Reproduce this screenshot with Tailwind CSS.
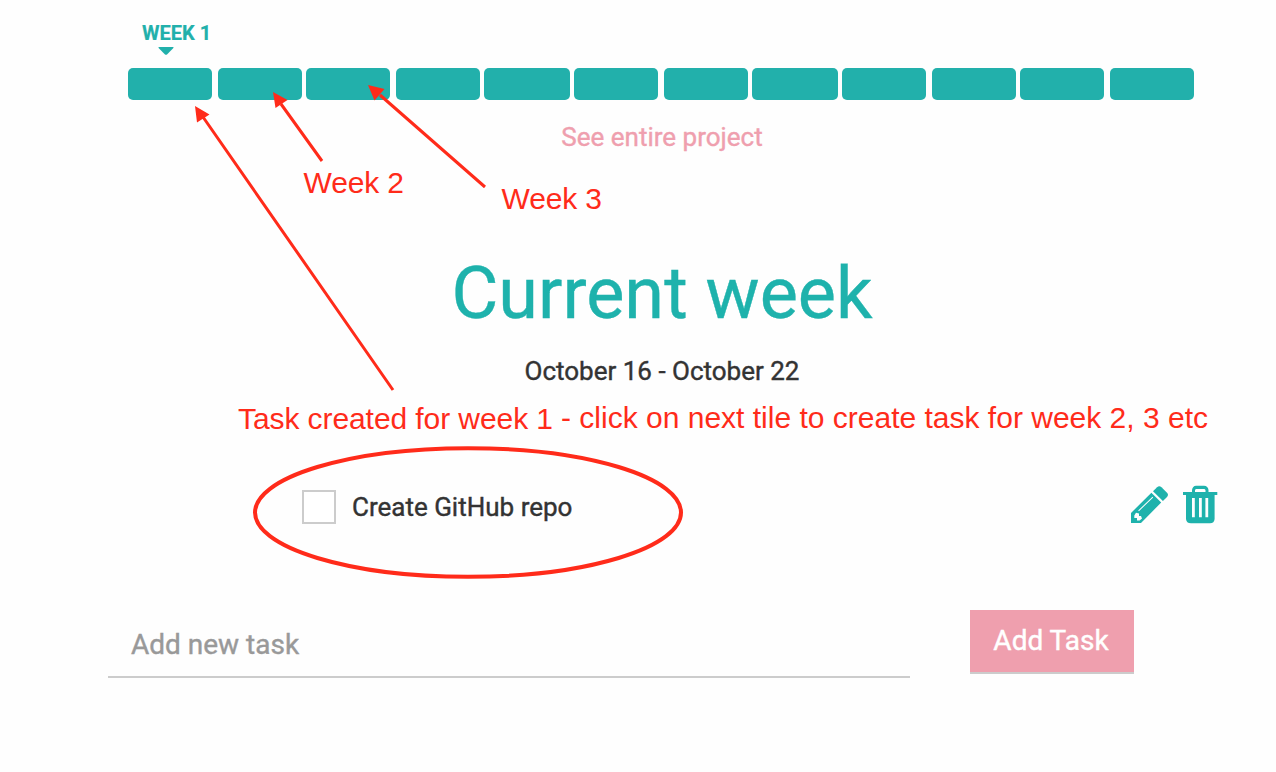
<!DOCTYPE html>
<html lang="en">
<head>
<meta charset="utf-8">
<title>Current week</title>
<script src="https://cdn.jsdelivr.net/npm/@tailwindcss/browser@4"></script>
</head>
<body class="bg-[#fefefe] font-[Roboto,sans-serif] text-[#333]">
<main class="relative flex h-[772px] w-[1276px] flex-col overflow-hidden [-webkit-text-stroke:0.4px]">
  <header class="flex h-[68px] flex-col pt-[21px]">
    <span class="ml-[142px] h-6 text-[20px] leading-6 font-bold whitespace-nowrap text-[#22b0ab] [-webkit-text-stroke:0.2px]">WEEK 1</span>
    <svg class="mt-0.5 ml-[158px] h-2 w-4" viewBox="0 0 16 8" fill="#22b0ab"><path d="M1 0H15Q16 0 15.400 1L9 7.400Q8 8.200 7 7.400L.6 1Q0 0 1 0Z"/></svg>
  </header>
  <nav class="flex h-8 pl-[128px] *:h-8 *:shrink-0 *:rounded-[5px] *:bg-[#22b0ab]">
    <div class="mr-1.5 w-[84px]"></div><div class="mr-1 w-[84px]"></div><div class="mr-1.5 w-[84px]"></div><div class="mr-1 w-[84px]"></div><div class="mr-1 w-[86px]"></div><div class="mr-1.5 w-[84px]"></div><div class="mr-1 w-[84px]"></div><div class="mr-1 w-[86px]"></div><div class="mr-1.5 w-[84px]"></div><div class="mr-1 w-[84px]"></div><div class="mr-1.5 w-[84px]"></div><div class="w-[84px]"></div>
  </nav>
  <a class="mt-[21px] ml-12 h-8 text-center text-[26px] leading-8 text-[#ef9fae]">See entire project</a>
  <h1 class="mt-[99px] ml-12 h-[84px] text-center text-[72px] leading-[84px] text-[#1eb2ac]">Current week</h1>
  <p class="mt-[19px] ml-12 h-8 text-center text-[26px] leading-8">October 16 - October 22</p>
  <section class="mt-[95px] flex h-[50px] items-center pl-[302px]">
    <div class="size-[34px] border-2 border-[#ccc] bg-white"></div>
    <span class="ml-4 text-[26px] leading-8">Create GitHub repo</span>
    <svg class="mr-3.5 ml-auto h-10 w-10 -translate-y-0.5" viewBox="0 0 40 40" fill="#1eb2ac"><path fill-rule="evenodd" d="M3 38V28L23.4 7.7 33.2 17.5 13 38ZM8 27.7 6.3 30.5V33H9V35.5H11.6L14 33.5 13 31H11V28.5ZM10.9 26.2 25.2 12.400 24.5 11.700 10.2 25.500Z"/><path d="M25 6.2 29.1 2.2Q31.3 .3 33.5 2.2L39 7.7Q41 9.8 39 12L34.9 16Z"/></svg>
    <svg class="mr-[58px] h-10 w-9 -translate-y-0.5" viewBox="0 0 36 40" fill="#1eb2ac"><path fill-rule="evenodd" d="M1 7H10V5Q10.6 1 14 .8H22Q26 1 26.5 5V7H35.3V10H32.6V34Q32.3 38.2 28 38.2H9Q4.3 38.2 4 34V10H1ZM13 7H23.5V5.2Q23.2 4 22 4H14.5Q13.2 4 13 5.2ZM10 13V32.2H12.8V13ZM17 13V32.2H19.8V13ZM23.4 13V32.2H26.2V13Z"/></svg>
  </section>
  <form class="mt-[78px] flex pl-[108px]">
    <div class="flex h-[68px] w-[802px] items-center border-b-2 border-[#ccc] pt-1 pl-[23px] text-[28px] text-[#999]">Add new task</div>
    <button type="button" class="ml-[60px] h-16 w-[164px] border-b-2 border-[#ccc] bg-[#ef9fae] pr-0.5 text-[28px] text-white">Add Task</button>
  </form>
  <svg class="absolute inset-0 h-[772px] w-[1276px] font-['Liberation_Sans',sans-serif] [-webkit-text-stroke:0]" viewBox="0 0 1276 772" fill="#ff2b1a">
    <g stroke="#ff2b1a" stroke-width="3"><path d="M203 117 393 390M281 104 322 161M380 95 485 187"/></g>
    <path d="M195 106 209.500 114.500 197 122.500ZM273 92 287.500 100 275.500 108ZM368 85 384.500 89 374.500 100.500Z"/>
    <ellipse cx="468" cy="512.500" rx="213" ry="64.300" fill="none" stroke="#ff2b1a" stroke-width="4"/>
    <g font-size="30">
      <text x="303.500" y="193" textLength="100.500">Week 2</text>
      <text x="501.500" y="209" textLength="100.500">Week 3</text>
      <text x="238" y="429" textLength="315">Task created for week 1</text>
      <text x="561" y="428" textLength="647">- click on next tile to create task for week 2, 3 etc</text>
    </g>
  </svg>
</main>
</body>
</html>
